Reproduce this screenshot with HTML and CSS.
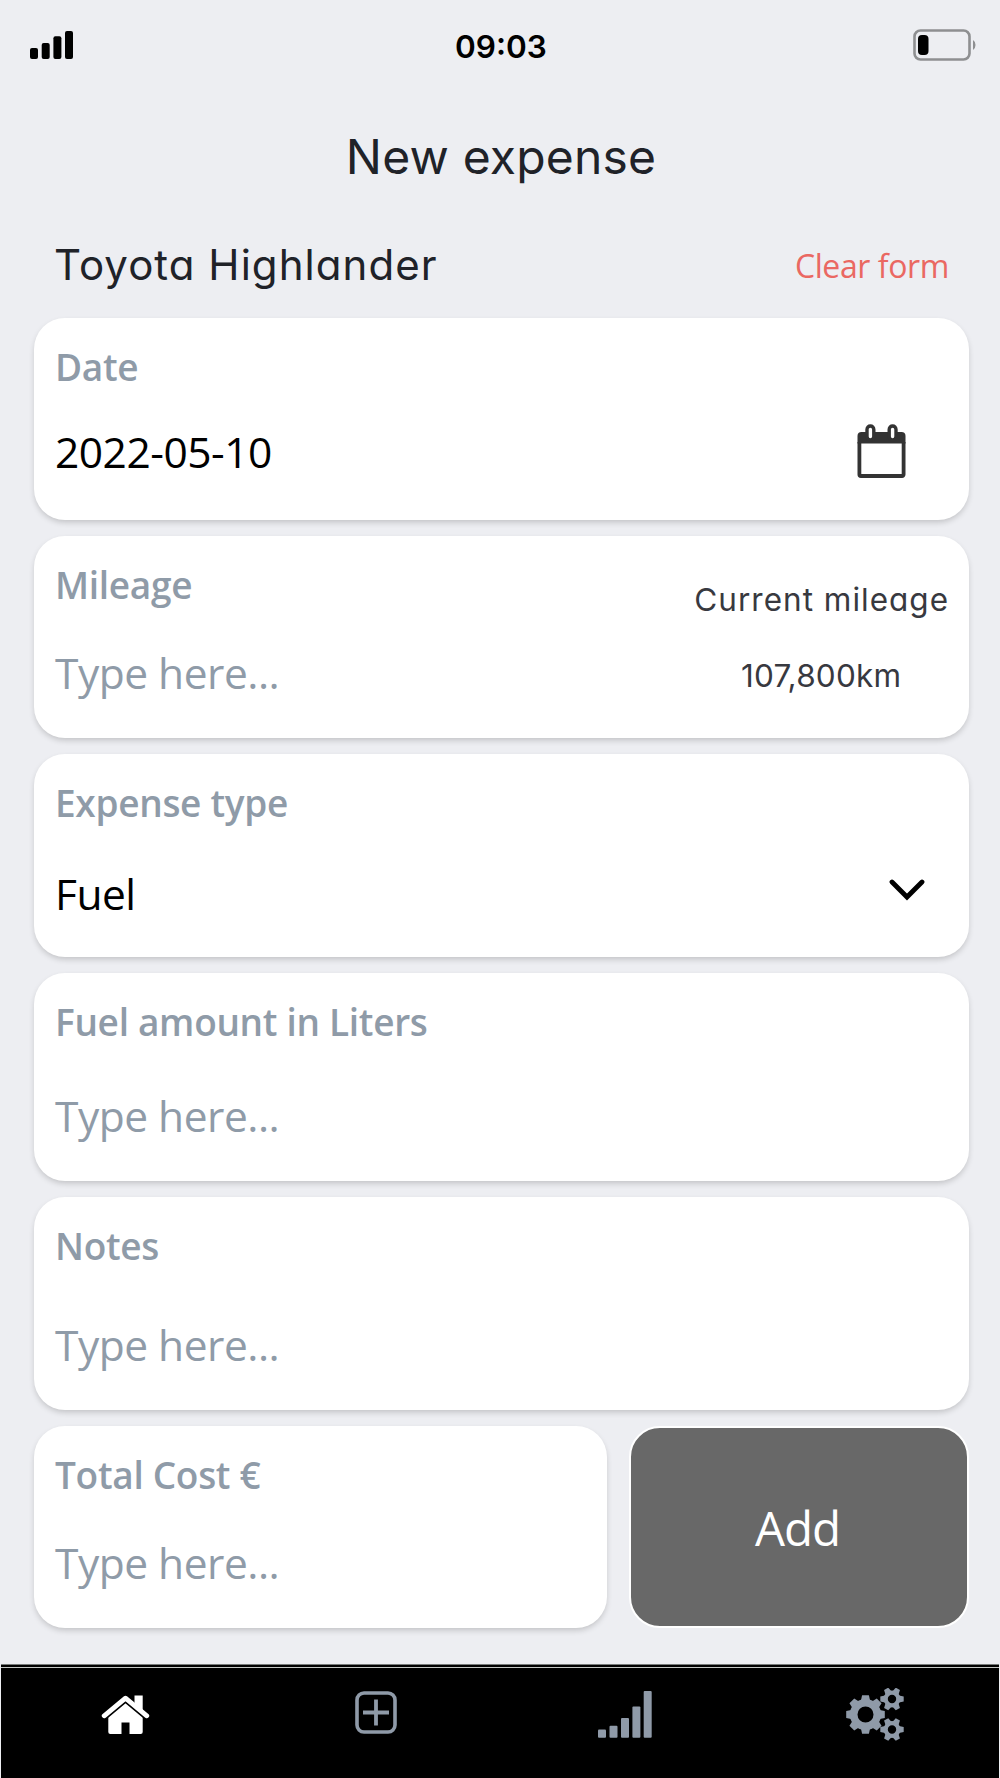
FILE: index.html
```
<!DOCTYPE html>
<html lang="en">
<head>
<meta charset="utf-8">
<title>New expense</title>
<link rel="stylesheet" href="styles.css">
</head>
<body>
<div class="screen">
  <header class="status">
    <svg class="signal" width="44" height="29" viewBox="0 0 44 29"><rect x="0" y="17" width="8" height="11" rx="2"/><rect x="11.700" y="12" width="8" height="16" rx="2"/><rect x="23.400" y="5.200" width="8" height="22.800" rx="2"/><rect x="35" y="0" width="8" height="28" rx="2"/></svg>
    <span class="time">09:03</span>
    <svg class="battery" width="64" height="32" viewBox="0 0 64 32"><rect x="1.500" y="1.500" width="55" height="29" rx="6" fill="none" stroke="#8e8f91" stroke-width="2.600"/><rect x="5" y="6" width="10.500" height="20" rx="4" fill="#000"/><path d="M60 11q2.500 1.500 2.500 5t-2.500 5z" fill="#8e8f91"/></svg>
  </header>
  <h1 class="title geo">New expense</h1>
  <div class="heading">
    <h2 class="vehicle geo">Toyota Highlander</h2>
    <span class="clear">Clear form</span>
  </div>
  <main class="form">
    <section class="card date">
      <div class="field"><span class="label">Date</span><span class="value">2022-05-10</span></div>
      <svg class="calendar" width="50" height="55" viewBox="0 0 50 55"><path d="M2.400 18v32.500a1.500 1.500 0 0 0 1.500 1.500h41.200a1.500 1.500 0 0 0 1.500-1.500V18" fill="none" stroke="#333" stroke-width="3.800"/><path d="M.5 19.500V12q0-4 4-4h40q4 0 4 4v7.500z" fill="#333"/><rect x="10" y="2" width="6.800" height="14" rx="3.400" fill="#fff" stroke="#333" stroke-width="3.400"/><rect x="32.200" y="2" width="6.800" height="14" rx="3.400" fill="#fff" stroke="#333" stroke-width="3.400"/></svg>
    </section>
    <section class="card mileage">
      <div class="field"><span class="label">Mileage</span><span class="value hint">Type here...</span></div>
      <div class="current geo"><span class="current-label">Current mileage</span><span class="current-value">107,800km</span></div>
    </section>
    <section class="card type">
      <div class="field"><span class="label">Expense type</span><span class="value">Fuel</span></div>
      <svg class="chevron" width="36" height="22" viewBox="0 0 36 22"><path d="M3 3l15 15L33 3" fill="none" stroke="#000" stroke-width="4.800" stroke-linecap="round"/></svg>
    </section>
    <section class="card amount">
      <div class="field"><span class="label">Fuel amount in Liters</span><span class="value hint">Type here...</span></div>
    </section>
    <section class="card notes">
      <div class="field"><span class="label">Notes</span><span class="value hint">Type here...</span></div>
    </section>
    <div class="footer-row">
      <section class="card cost">
        <div class="field"><span class="label">Total Cost €</span><span class="value hint">Type here...</span></div>
      </section>
      <button class="add" type="button">Add</button>
    </div>
  </main>
  <nav class="tabs">
    <svg class="home" width="49" height="40" viewBox="0 0 49 40"><path d="M7.300 21L24.500 7.500 41.700 21v16q0 2-2 2H28.500V27.500h-8V39H9.300q-2 0-2-2z" fill="#fff"/><path d="M3.200 20.800L24.500 3.200l21.300 17.600" fill="none" stroke="#000" stroke-width="8"/><path d="M33.500.5h8.200V17l-8.200-7z" fill="#fff"/><path d="M3.200 20.800L24.500 3.200l21.300 17.600" fill="none" stroke="#fff" stroke-width="4.800" stroke-linecap="round" stroke-linejoin="round"/></svg>
    <svg class="plus" width="42" height="43" viewBox="0 0 42 43" fill="none" stroke="#8f9aa8"><rect x="2" y="2" width="38" height="39" rx="7" stroke-width="3.600"/><path d="M8 21.500h26M21 8.500v26" stroke-width="3.800"/></svg>
    <svg class="stats" width="54" height="47" viewBox="0 0 54 47" fill="#8f9aa8"><rect x="0" y="38.500" width="8" height="8.300" rx="1"/><rect x="11.500" y="34.800" width="8" height="12" rx="1"/><rect x="23" y="27" width="8" height="19.800" rx="1"/><rect x="34.400" y="15.500" width="8" height="31.300" rx="1"/><rect x="45.700" y="0" width="8" height="46.800" rx="1"/></svg>
    <svg class="gears" width="58" height="53" viewBox="0 0 58 53"><defs>
      <path id="tooth" d="M-4.800-13L-3.400-19.300h6.800L4.800-13z"/>
      <path id="tooth-small" d="M-3.400-7l1-4.700h4.800l1 4.700z"/>
      <g id="gear-small"><circle r="6.300" fill="none" stroke="#8f9aa8" stroke-width="4.200"/><g fill="#8f9aa8"><use href="#tooth-small" transform="rotate(30)"/><use href="#tooth-small" transform="rotate(90)"/><use href="#tooth-small" transform="rotate(150)"/><use href="#tooth-small" transform="rotate(210)"/><use href="#tooth-small" transform="rotate(270)"/><use href="#tooth-small" transform="rotate(330)"/></g></g></defs>
      <g transform="translate(19.500 26.500)"><circle r="11.800" fill="none" stroke="#8f9aa8" stroke-width="7.600"/><g fill="#8f9aa8"><use href="#tooth"/><use href="#tooth" transform="rotate(45)"/><use href="#tooth" transform="rotate(90)"/><use href="#tooth" transform="rotate(135)"/><use href="#tooth" transform="rotate(180)"/><use href="#tooth" transform="rotate(225)"/><use href="#tooth" transform="rotate(270)"/><use href="#tooth" transform="rotate(315)"/></g></g>
      <use href="#gear-small" x="46" y="11"/><use href="#gear-small" x="46" y="41.500"/></svg>
  </nav>
</div>
</body>
</html>
```
FILE: styles.css
```
* { box-sizing: border-box; }
body { margin: 0; background: #edeef2; font-family: "Open Sans", sans-serif; }
.screen { width: 1000px; height: 1778px; display: flex; flex-direction: column; overflow: hidden; }
.geo { font-family: Inter, sans-serif; font-feature-settings: "cv11"; color: #202228; }
.status { height: 92px; flex: none; display: grid; grid-template-columns: 1fr auto 1fr; align-items: start; padding: 30px 23px 0 30px; }
.signal { margin-top: 1px; }
.time { font: 600 31.500px/40px Inter, sans-serif; letter-spacing: 0; margin-top: -3px; margin-right: 5px; }
.battery { justify-self: end; margin-top: -1px; }
.title { margin: 0; height: 130px; flex: none; padding-left: 2px; text-align: center; font-size: 48px; font-weight: 400; line-height: 129px; letter-spacing: .2px; }
.heading { height: 95.500px; flex: none; display: flex; justify-content: space-between; padding: 0 51px 0 54px; }
.vehicle { margin: 0; font-size: 42px; font-weight: 400; line-height: 86px; letter-spacing: 1.050px; }
.clear { color: #ea6862; font-size: 32px; line-height: 88px; letter-spacing: -.4px; }
.form { display: flex; flex-direction: column; gap: 16px; padding: 0 31px 0 34px; }
.card { height: 202.400px; display: flex; justify-content: space-between; background: #fff; border-radius: 31px; padding: 24px 21px 0; box-shadow: 0 3px 6px -1px rgba(0, 0, 0, .2); }
.field { display: flex; flex-direction: column; }
.label { color: #8f9ba8; font-size: 37px; font-weight: 550; line-height: 50px; letter-spacing: -.3px; }
.value { color: #000; font-size: 42.500px; line-height: 58px; letter-spacing: -.5px; margin-top: 31.500px; }
.hint { color: #8f9ba8; }
.mileage .value { margin-top: 34.500px; }
.type .value { margin-top: 37px; }
.amount { height: 208px; }
.amount .value { margin-top: 40px; }
.notes { height: 213px; }
.notes .value { margin-top: 45px; }
.cost .value { margin-top: 34.500px; }
.calendar { margin: 82.500px 41px 0 0; }
.current { display: flex; flex-direction: column; align-items: center; font-size: 31.500px; line-height: 40px; color: #38393f; }
.current-label { margin-top: 20px; letter-spacing: 1px; margin-right: -1px; }
.current-value { margin-top: 36px; letter-spacing: .2px; }
.chevron { margin: 101px 23px 0 0; }
.footer-row { display: flex; gap: 22px; }
.cost { width: 573px; }
.add { width: 340px; height: 202.400px; padding: 1px 3px 0 0; border: 2.500px solid #fff; border-radius: 31px; background: #686868; color: #fff; font: 400 47.500px "Open Sans", sans-serif; letter-spacing: -1px; }
.tabs { flex: none; height: 114px; margin: auto 1px 0; background: #000; border-top: 1px solid #777a79; box-shadow: inset 0 2px #000, inset 0 3px #c5c8c5; display: grid; grid-template-columns: 150px 297px 256px 296px; align-items: start; }
.home { margin: 30px 0 0 100px; }
.plus { margin: 26px 0 0 204px; }
.stats { margin: 26px 0 0 150px; }
.gears { margin: 23px 0 0 142px; }
```
